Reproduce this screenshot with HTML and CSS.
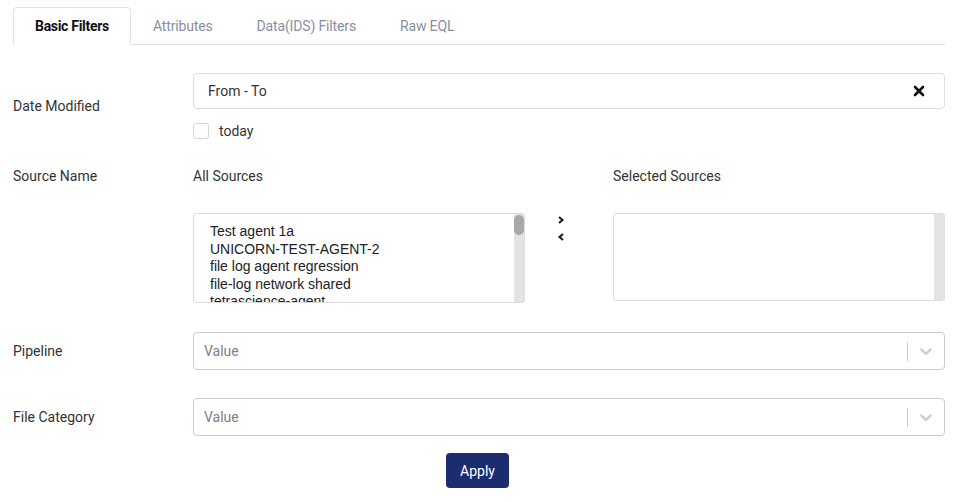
FILE: index.html
```html
<!DOCTYPE html>
<html>
<head>
<meta charset="utf-8">
<link rel="stylesheet" href="styles.css">
</head>
<body>
<div class="page">
  <div class="tabs">
    <div class="tab active">Basic Filters</div>
    <div class="tab">Attributes</div>
    <div class="tab">Data(IDS) Filters</div>
    <div class="tab">Raw EQL</div>
  </div>

  <div class="row row-date">
    <div class="label">Date Modified</div>
    <div class="field">
      <div class="date-input">
        <span>From - To</span>
        <svg class="clear" width="12" height="12" viewBox="0 0 12 12"><path d="M2 2 L10 10 M10 2 L2 10" stroke="#111" stroke-width="2.6" stroke-linecap="round"/></svg>
      </div>
      <div class="check-row">
        <span class="checkbox"></span>
        <span>today</span>
      </div>
    </div>
  </div>

  <div class="row row-source">
    <div class="label">Source Name</div>
    <div class="source-grid">
      <div class="col">
        <div class="col-head">All Sources</div>
        <div class="listbox tall">
          <div class="items">
            <div>Test agent 1a</div>
            <div>UNICORN-TEST-AGENT-2</div>
            <div>file log agent regression</div>
            <div>file-log network shared</div>
            <div>tetrascience-agent</div>
          </div>
          <div class="track"><div class="thumb"></div></div>
        </div>
      </div>
      <div class="arrows">
        <svg width="8" height="10" viewBox="0 0 8 10"><path d="M2 2 L5.5 5 L2 8" fill="none" stroke="#222" stroke-width="2.2"/></svg>
        <svg width="8" height="10" viewBox="0 0 8 10"><path d="M6 2 L2.5 5 L6 8" fill="none" stroke="#222" stroke-width="2.2"/></svg>
      </div>
      <div class="col">
        <div class="col-head">Selected Sources</div>
        <div class="listbox short">
          <div class="items"></div>
          <div class="track"></div>
        </div>
      </div>
    </div>
  </div>

  <div class="row row-select">
    <div class="label">Pipeline</div>
    <div class="select">
      <span class="placeholder">Value</span>
      <span class="sep"></span>
      <svg class="chev" width="20" height="20" viewBox="0 0 20 20"><path fill="#ccc" d="M4.516 7.548c0.436-0.446 1.043-0.481 1.576 0l3.908 3.747 3.908-3.747c0.533-0.481 1.141-0.446 1.574 0 0.436 0.445 0.408 1.197 0 1.615-0.406 0.418-4.695 4.502-4.695 4.502-0.217 0.223-0.502 0.335-0.787 0.335s-0.57-0.112-0.789-0.335c0 0-4.287-4.084-4.695-4.502s-0.436-1.17 0-1.615z"/></svg>
    </div>
  </div>

  <div class="row row-select second">
    <div class="label">File Category</div>
    <div class="select">
      <span class="placeholder">Value</span>
      <span class="sep"></span>
      <svg class="chev" width="20" height="20" viewBox="0 0 20 20"><path fill="#ccc" d="M4.516 7.548c0.436-0.446 1.043-0.481 1.576 0l3.908 3.747 3.908-3.747c0.533-0.481 1.141-0.446 1.574 0 0.436 0.445 0.408 1.197 0 1.615-0.406 0.418-4.695 4.502-4.695 4.502-0.217 0.223-0.502 0.335-0.787 0.335s-0.57-0.112-0.789-0.335c0 0-4.287-4.084-4.695-4.502s-0.436-1.17 0-1.615z"/></svg>
    </div>
  </div>

  <div class="actions">
    <button class="apply">Apply</button>
  </div>
</div>
</body>
</html>
```

FILE: styles.css
```css
* { box-sizing: border-box; }
html, body { margin: 0; padding: 0; background: #fff; }
body {
  font-family: Roboto, "Liberation Sans", Arial, sans-serif;
  font-size: 14px;
  color: #333;
}
.page {
  padding: 7px 10px 0 13px;
}
.tabs {
  display: flex;
  border-bottom: 1px solid #dee2e6;
}
.tab {
  padding: 10px 21px;
  line-height: 16px;
  border: 1px solid transparent;
  border-top-left-radius: 4px;
  border-top-right-radius: 4px;
  margin-bottom: -1px;
  color: #8a8fa0;
  letter-spacing: -0.15px;
}
.tab.active {
  font-weight: 700;
  color: #111;
  background: #fff;
  border-color: #dee2e6 #dee2e6 #fff;
  letter-spacing: -0.3px;
}
.row {
  display: grid;
  grid-template-columns: 180px 1fr;
}
.label { line-height: 16px; color: #333; }
.row-date { margin-top: 28px; align-items: center; }
.date-input {
  height: 36px;
  border: 1px solid #dddddd;
  border-radius: 4px;
  display: flex;
  align-items: center;
  justify-content: space-between;
  padding: 0 19px 0 14px;
  color: #333;
}
.check-row {
  margin-top: 14px;
  display: flex;
  align-items: center;
  gap: 10px;
  height: 16px;
  line-height: 16px;
}
.checkbox {
  width: 16px;
  height: 16px;
  border: 1px solid #d6d6d6;
  border-radius: 3px;
}
.row-source { margin-top: 29px; align-items: start; }
.source-grid {
  display: grid;
  grid-template-columns: 332px 88px 332px;
}
.col-head { line-height: 16px; height: 16px; }
.listbox {
  margin-top: 29px;
  border: 1px solid #dcdcdc;
  border-radius: 3px;
  display: flex;
  overflow: hidden;
}
.listbox.tall { height: 90px; }
.listbox.short { height: 88px; }
.items {
  flex: 1;
  padding: 9px 0 0 16px;
  font-family: "Liberation Sans", Arial, sans-serif;
  font-size: 14px;
  line-height: 17.5px;
  color: #222;
  overflow: hidden;
}
.track {
  width: 10px;
  background: #e3e3e3;
  padding-top: 1px;
}
.thumb {
  width: 10px;
  height: 20px;
  background: #a8a8a8;
  border-radius: 5px;
}
.arrows {
  margin-top: 45px;
  padding-left: 32px;
  display: flex;
  flex-direction: column;
  gap: 7px;
  padding-top: 2px;
}
.arrows svg { display: block; }
.row-select { margin-top: 29px; align-items: center; }
.row-select.second { margin-top: 28px; }
.select {
  height: 38px;
  border: 1px solid #cccccc;
  border-radius: 4px;
  display: flex;
  align-items: center;
  padding-left: 10px;
}
.placeholder { flex: 1; color: #808080; }
.sep {
  width: 1px;
  height: 19px;
  background: #cccccc;
}
.chev { margin: 0 8px; display: block; }
.actions {
  display: flex;
  justify-content: center;
  margin-top: 17px;
}
.apply {
  width: 63px;
  height: 35px;
  background: #1c2d6f;
  color: #fff;
  border: none;
  border-radius: 4px;
  font-family: Roboto, "Liberation Sans", Arial, sans-serif;
  font-size: 14px;
  margin-right: 3px;
}
```
